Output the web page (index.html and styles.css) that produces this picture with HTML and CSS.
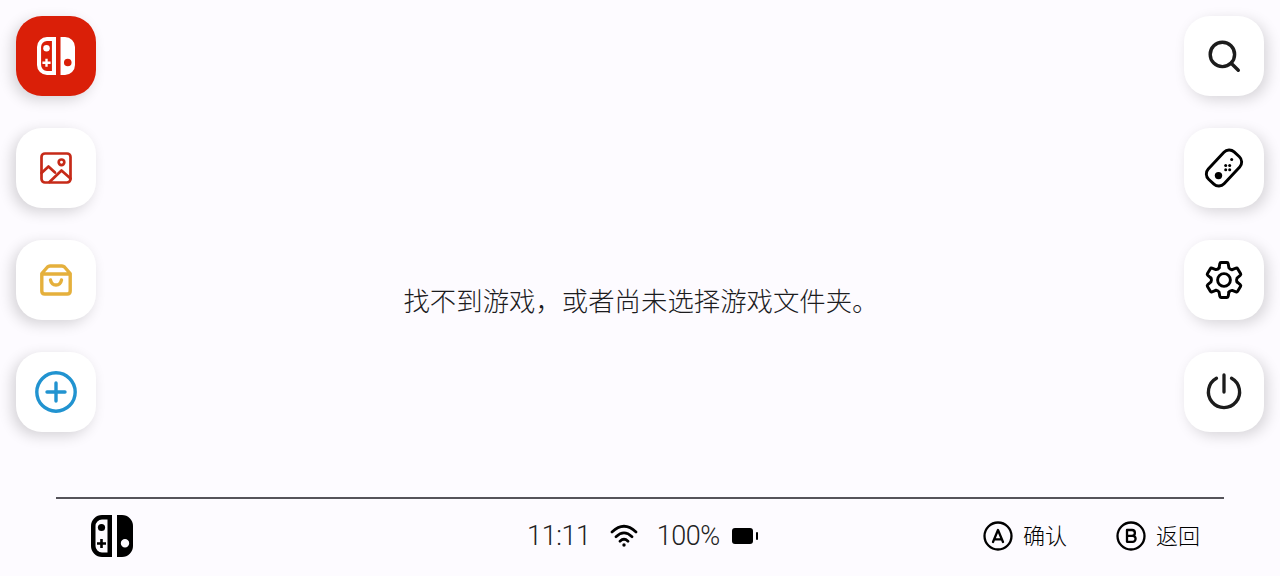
FILE: index.html
```html
<!doctype html>
<html lang="zh-CN">
<head>
	<meta charset="utf-8">
	<title>游戏</title>
	<link rel="stylesheet" href="styles.css">
</head>
<body>
	<svg class="defs" width="0" height="0">
		<symbol id="switch" viewBox="0 0 42 42">
			<path fill="currentColor" fill-rule="evenodd" d="M11 0H21V42H11A11 11 0 0 1 0 31V11A11 11 0 0 1 11 0ZM11 4.5A6.5 6.5 0 0 0 4.5 11V31A6.5 6.5 0 0 0 11 37.5H16.500V4.500Z"/>
			<circle cx="10.500" cy="12.500" r="3.600" fill="currentColor"/>
			<path d="M10.500 24V33M6 28.500H15" stroke="currentColor" stroke-width="2.600"/>
			<path fill="currentColor" fill-rule="evenodd" d="M26 0H31A11 11 0 0 1 42 11V31A11 11 0 0 1 31 42H26ZM34 24A4.200 4.200 0 1 0 34 32.400A4.200 4.200 0 1 0 34 24Z"/>
		</symbol>
	</svg>

	<div id="main">
		<div class="side left">
			<button class="tile red"><svg width="38" height="38"><use href="#switch"/></svg></button>
			<button class="tile album">
				<svg width="34" height="34" viewBox="0 0 34 34" stroke-width="2.700">
					<rect x="2.500" y="2.500" width="29" height="29" rx="3.500"/>
					<circle cx="22.500" cy="11.300" r="2.800"/>
					<path d="M2.500 22L9.500 15.500L16 21.500M10.500 31L22.500 19.500L31.500 27.500"/>
				</svg>
			</button>
			<button class="tile shop">
				<svg width="34" height="34" viewBox="0 0 34 34" stroke-width="3.400">
					<path d="M2.800 10.500V28Q2.800 31 5.800 31H28.200Q31.200 31 31.200 28V10.500L25.500 4Q24.500 3 23 3H11Q9.500 3 8.500 4ZM3 11H31M11.500 17Q12.500 22 17 22Q21.500 22 22.500 17"/>
				</svg>
			</button>
			<button class="tile add">
				<svg width="44" height="44" viewBox="0 0 44 44" stroke-width="3.400">
					<circle cx="22" cy="22" r="19.200"/>
					<path d="M22 13V31M13 22H31"/>
				</svg>
			</button>
		</div>

		<p id="message">找不到游戏，或者尚未选择游戏文件夹。</p>

		<div class="side right">
			<button class="tile soft">
				<svg width="40" height="40" viewBox="0 0 40 40" stroke-width="3.400">
					<circle cx="18.400" cy="18.400" r="12.200"/>
					<path d="M27.200 27.200L34.300 34.300"/>
				</svg>
			</button>
			<button class="tile">
				<svg width="44" height="44" viewBox="-22 -22 44 44" stroke-width="2.900">
					<rect x="-18.700" y="-10.800" width="37.400" height="21.600" rx="7.200" transform="rotate(-47)"/>
					<g fill="currentColor" stroke="none">
						<circle cx="-5.500" cy="7.600" r="3.700"/>
						<circle cx="1.700" cy="-2.500" r="1.500"/>
						<circle cx="5.700" cy="-2.500" r="1.500"/>
						<circle cx="1.700" cy="1.700" r="1.500"/>
						<circle cx="5.700" cy="1.700" r="1.500"/>
						<circle cx="7.700" cy="-8.500" r="1.500"/>
					</g>
				</svg>
			</button>
			<button class="tile">
				<svg width="44" height="44" viewBox="-22 -22 44 44" stroke-width="2.900">
					<!-- one tooth, turned six times -->
					<path id="tooth" d="M-4.900 -12.200L-4.200 -16.300Q-4 -17.500 -3 -17.500H3Q4 -17.500 4.200 -16.300L4.900 -12.200Q6.200 -10.400 8.100 -10.300"/>
					<use href="#tooth" transform="rotate(60)"/>
					<use href="#tooth" transform="rotate(120)"/>
					<use href="#tooth" transform="rotate(180)"/>
					<use href="#tooth" transform="rotate(240)"/>
					<use href="#tooth" transform="rotate(300)"/>
					<circle r="6.400"/>
				</svg>
			</button>
			<button class="tile soft">
				<svg width="44" height="44" viewBox="-22 -22 44 44" stroke-width="3.300">
					<path d="M0 -17V0M-7.500 -13.700A15.600 15.600 0 1 0 7.500 -13.700"/>
				</svg>
			</button>
		</div>
	</div>

	<div id="footer">
		<svg class="logo" width="42" height="42"><use href="#switch"/></svg>

		<div class="status">
			<span class="time">11:11</span>
			<svg class="wifi" width="28" height="24" viewBox="0 0 28 24" stroke-width="2.700">
				<path d="M2 8Q14 -3.500 26 8M6 12.700Q14 5 22 12.700M10 17.200Q14 13.300 18 17.200"/>
				<circle cx="14" cy="21" r="1.700" fill="currentColor" stroke="none"/>
			</svg>
			<span class="percent">100%</span>
			<div class="battery"></div>
		</div>

		<div class="keys">
			<div class="key">
				<svg width="30" height="30" viewBox="0 0 30 30" stroke-width="2.300">
					<circle cx="15" cy="15" r="13.500"/>
					<path d="M10 21L15 9L20 21M11.500 18.300H18.500"/>
				</svg>
				<span>确认</span>
			</div>
			<div class="key">
				<svg width="30" height="30" viewBox="0 0 30 30" stroke-width="2.300">
					<circle cx="15" cy="15" r="13.500"/>
					<path d="M11 9H16A2.900 2.900 0 0 1 16 14.800H11H16.600A3 3 0 0 1 16.600 20.800H11Z"/>
				</svg>
				<span>返回</span>
			</div>
		</div>
	</div>
</body>
</html>
```
FILE: styles.css
```css
* {
	box-sizing: border-box;
}

body {
	margin: 0;
	height: 576px;
	overflow: hidden;
	background-color: #fdfbff;
	color: #000;
	font-family: "Noto Sans CJK SC", sans-serif;
	font-weight: 300;
}

svg {
	display: block;
	fill: none;
	stroke: currentColor;
	stroke-linecap: round;
	stroke-linejoin: round;
}

symbol {
	stroke: none;
	stroke-linecap: butt;
}

.defs {
	display: none;
}

#main {
	display: flex;
	justify-content: space-between;
	height: 497px;
	padding: 16px;
}

.side {
	display: flex;
	flex-direction: column;
	gap: 32px;
}

.tile {
	display: flex;
	align-items: center;
	justify-content: center;
	width: 80px;
	height: 80px;
	padding: 0;
	border: none;
	border-radius: 26px;
	background-color: #fff;
	color: #000;
	box-shadow: 4px 4px 14px rgba(0, 0, 0, 0.15);
}

.left .tile {
	box-shadow: -4px 4px 14px rgba(0, 0, 0, 0.16);
}

.left .red {
	background-color: #da1f08;
	color: #fff;
}

.left .album {
	color: #c62a18;
}

.left .shop {
	color: #e5b03c;
}

.left .add {
	color: #2193d0;
}

.soft {
	color: #1c1c1c;
}

#message {
	margin: 264px 0 0 2px;
	font-size: 26.4px;
	line-height: 40px;
	color: #1c1c1e;
}

#footer {
	display: grid;
	grid-template-columns: 1fr auto 1fr;
	align-items: center;
	height: 76px;
	margin: 0 56px;
	padding: 0 24px 0 35px;
	border-top: 2px solid #55535a;
}

.status {
	display: flex;
	align-items: center;
	margin-right: 5px;
	font-family: Roboto, sans-serif;
	font-size: 27px;
	letter-spacing: -0.4px;
	color: #222;
}

.wifi {
	margin: 0 19px;
	color: #000;
}

.battery {
	position: relative;
	width: 21px;
	height: 16px;
	margin: 0 6px 0 12px;
	border-radius: 3px;
	background-color: #000;
}

.battery::after {
	content: "";
	position: absolute;
	left: 24px;
	top: 4px;
	width: 2px;
	height: 8px;
	border-radius: 1px;
	background-color: #000;
}

.keys {
	display: flex;
	justify-content: flex-end;
	gap: 49px;
}

.key {
	display: flex;
	align-items: center;
	gap: 10px;
	font-size: 22px;
	line-height: 30px;
}

.key span {
	margin-top: -4px;
}
```
